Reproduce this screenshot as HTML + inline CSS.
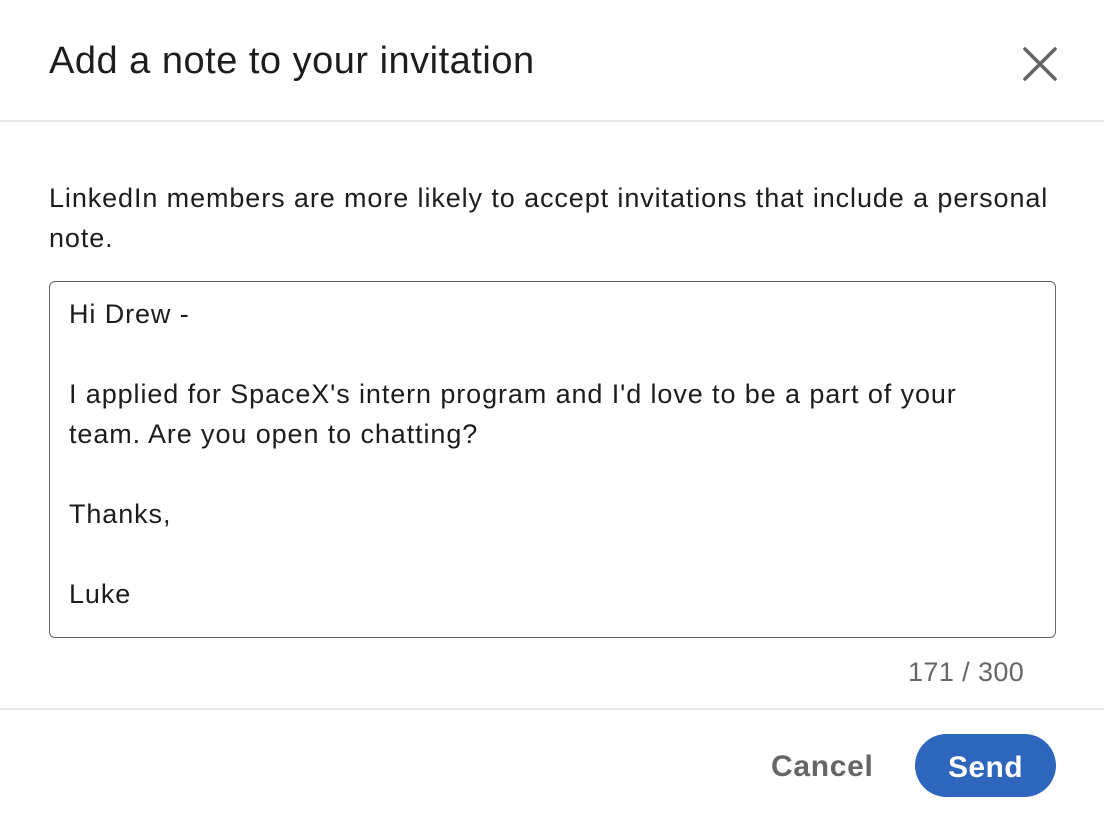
<!DOCTYPE html>
<html><head><meta charset="utf-8"><style>
html,body{margin:0;padding:0;background:#fff;width:1104px;height:820px;overflow:hidden;font-family:"Liberation Sans",sans-serif;color:rgba(0,0,0,.9)}
.t{position:absolute;white-space:nowrap}
</style></head><body>
<div class="t" style="left:49px;top:39px;font-size:38px;line-height:44px;color:#1d1d1d;letter-spacing:0.5px">Add a note to your invitation</div>
<svg style="position:absolute;left:1022px;top:46px" width="36" height="36" viewBox="0 0 36 36"><path d="M3 3L33 33M33 3L3 33" stroke="#666" stroke-width="3.6" stroke-linecap="round"/></svg>
<div style="position:absolute;left:0;top:120px;width:1104px;height:2px;background:#e8e8e8"></div>
<div class="t" style="left:49px;top:178px;font-size:27px;line-height:40px;color:#1d1d1d;letter-spacing:0.9px">LinkedIn members are more likely to accept invitations that include a personal<br>note.</div>
<div style="position:absolute;left:49px;top:281px;width:1005px;height:355px;border:1.5px solid #666;border-radius:6px"></div>
<div class="t" style="left:69px;top:294px;font-size:27px;line-height:40px;color:#1d1d1d;letter-spacing:0.9px">Hi Drew -<br><br>I applied for SpaceX's intern program and I'd love to be a part of your<br>team. Are you open to chatting?<br><br>Thanks,<br><br>Luke</div>
<div class="t" style="left:908px;top:656px;font-size:27px;line-height:32px;color:#666;letter-spacing:0.4px">171 / 300</div>
<div style="position:absolute;left:0;top:708px;width:1104px;height:2px;background:#e8e8e8"></div>
<div class="t" style="left:771px;top:750px;font-size:30px;line-height:34px;font-weight:bold;color:#666;letter-spacing:0.7px">Cancel</div>
<div style="position:absolute;left:915px;top:734px;width:141px;height:63px;border-radius:32px;background:#2e66bd;color:#fff;font-weight:bold;font-size:30px;line-height:67px;text-align:center;letter-spacing:0.4px">Send</div>
</body></html>
